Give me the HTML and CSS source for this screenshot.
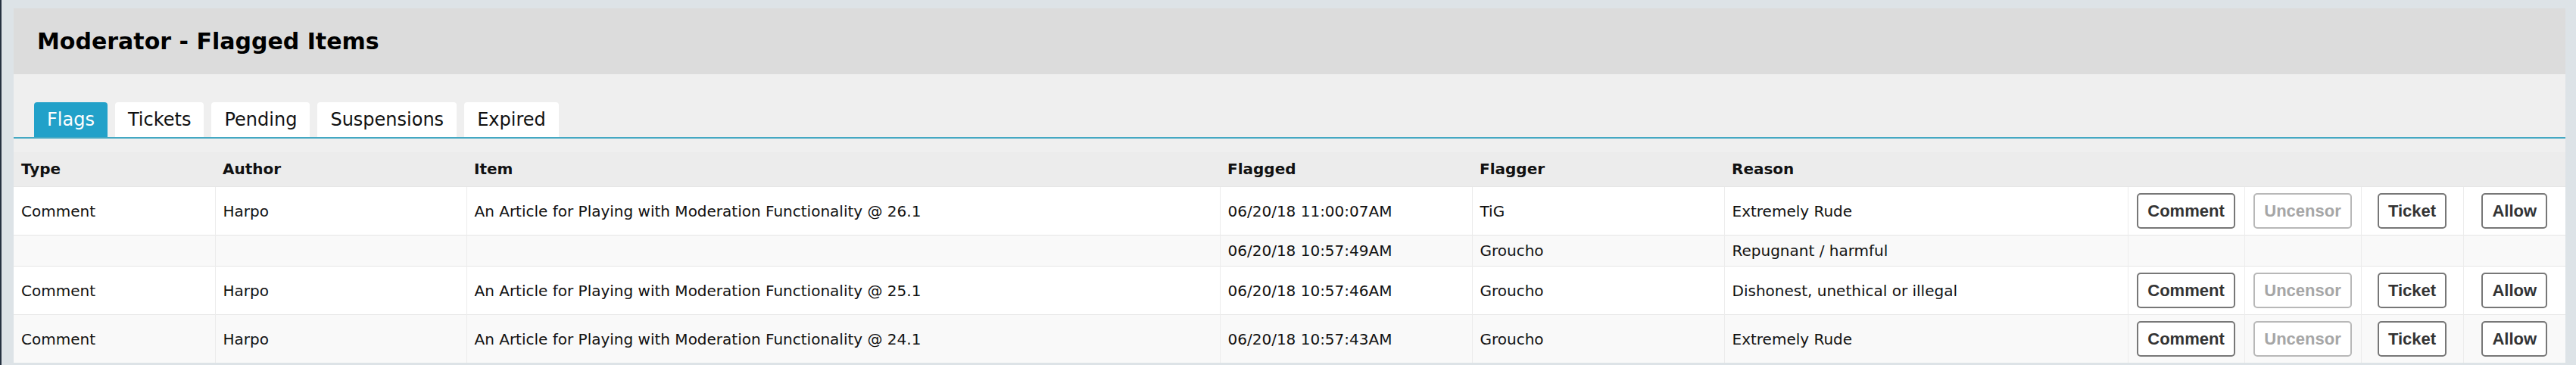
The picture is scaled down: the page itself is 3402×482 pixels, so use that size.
FILE: index.html
```html
<!DOCTYPE html>
<html>
<head>
    <meta charset="UTF-8">
    <link rel="stylesheet" href="styles.css">
</head>
<body>
    <div class="moderator-panel">
        <!-- Başlık -->
        <div class="panel-header">
            <h2>Moderator - Flagged Items</h2>
        </div>

        <div class="panel-body">
            <!-- Sekmeler -->
            <div class="tab-bar">
                <span class="tab active">Flags</span>
                <span class="tab">Tickets</span>
                <span class="tab">Pending</span>
                <span class="tab">Suspensions</span>
                <span class="tab">Expired</span>
            </div>

            <!-- İşaretli Öğeler -->
            <table class="flag-table">
                <colgroup>
                    <col class="col-type">
                    <col class="col-author">
                    <col class="col-item">
                    <col class="col-flagged">
                    <col class="col-flagger">
                    <col class="col-reason">
                    <col class="col-wide-btn">
                    <col class="col-wide-btn">
                    <col class="col-btn">
                    <col class="col-btn">
                </colgroup>
                <thead>
                    <tr>
                        <th>Type</th>
                        <th>Author</th>
                        <th>Item</th>
                        <th>Flagged</th>
                        <th>Flagger</th>
                        <th>Reason</th>
                        <th></th>
                        <th></th>
                        <th></th>
                        <th></th>
                    </tr>
                </thead>
                <tbody>
                    <tr>
                        <td>Comment</td>
                        <td>Harpo</td>
                        <td>An Article for Playing with Moderation Functionality @ 26.1</td>
                        <td>06/20/18 11:00:07AM</td>
                        <td>TiG</td>
                        <td>Extremely Rude</td>
                        <td class="action"><button class="mod-btn">Comment</button></td>
                        <td class="action"><button class="mod-btn" disabled>Uncensor</button></td>
                        <td class="action"><button class="mod-btn">Ticket</button></td>
                        <td class="action"><button class="mod-btn">Allow</button></td>
                    </tr>
                    <tr>
                        <td></td>
                        <td></td>
                        <td></td>
                        <td>06/20/18 10:57:49AM</td>
                        <td>Groucho</td>
                        <td>Repugnant / harmful</td>
                        <td></td>
                        <td></td>
                        <td></td>
                        <td></td>
                    </tr>
                    <tr>
                        <td>Comment</td>
                        <td>Harpo</td>
                        <td>An Article for Playing with Moderation Functionality @ 25.1</td>
                        <td>06/20/18 10:57:46AM</td>
                        <td>Groucho</td>
                        <td>Dishonest, unethical or illegal</td>
                        <td class="action"><button class="mod-btn">Comment</button></td>
                        <td class="action"><button class="mod-btn" disabled>Uncensor</button></td>
                        <td class="action"><button class="mod-btn">Ticket</button></td>
                        <td class="action"><button class="mod-btn">Allow</button></td>
                    </tr>
                    <tr>
                        <td>Comment</td>
                        <td>Harpo</td>
                        <td>An Article for Playing with Moderation Functionality @ 24.1</td>
                        <td>06/20/18 10:57:43AM</td>
                        <td>Groucho</td>
                        <td>Extremely Rude</td>
                        <td class="action"><button class="mod-btn">Comment</button></td>
                        <td class="action"><button class="mod-btn" disabled>Uncensor</button></td>
                        <td class="action"><button class="mod-btn">Ticket</button></td>
                        <td class="action"><button class="mod-btn">Allow</button></td>
                    </tr>
                </tbody>
            </table>
        </div>
    </div>
</body>
</html>
```

FILE: styles.css
```css
/* Temel Stiller */
body {
    margin: 0;
    padding: 11px 14px 0 16px;
    background-color: #dde3e7;
    border-left: 2px solid #263241;
    font-family: 'DejaVu Sans', Verdana, sans-serif;
    color: #111;
    height: 471px;
    overflow: hidden;
}

/* Panel */
.moderator-panel {
    background-color: #efefef;
}

.panel-header {
    display: flex;
    align-items: center;
    height: 87px;
    padding: 0 31px;
    background-color: #dcdcdc;
}

.panel-header h2 {
    margin: 0;
    font-size: 30px;
    font-weight: bold;
    color: #000;
}

/* Sekmeler */
.tab-bar {
    display: flex;
    gap: 10px;
    padding: 37px 0 0 27px;
    border-bottom: 2px solid #44a8c3;
}

.tab {
    display: block;
    padding: 9px 17px;
    line-height: 28px;
    font-size: 24px;
    background-color: #fff;
    color: #111;
    border-radius: 4px 4px 0 0;
}

.tab.active {
    background-color: #22a1c9;
    color: #fff;
}

/* Tablo */
.flag-table {
    width: 100%;
    margin-top: 18px;
    border-collapse: collapse;
    table-layout: fixed;
    font-size: 20px;
}

.col-type { width: 266px; }
.col-author { width: 332px; }
.col-item { width: 995px; }
.col-flagged { width: 333px; }
.col-flagger { width: 333px; }
.col-reason { width: 533px; }
.col-wide-btn { width: 154px; }
.col-btn { width: 135px; }

.flag-table th {
    padding: 10px 10px 11px;
    line-height: 24px;
    text-align: left;
    font-weight: bold;
    background-color: #ececec;
}

.flag-table td {
    padding: 8px 10px;
    line-height: 24px;
    white-space: nowrap;
    background-color: #fff;
    border-top: 1px solid #e6e6e6;
    border-left: 1px solid #ececec;
}

.flag-table td:first-child {
    border-left: none;
}

.flag-table tbody tr:nth-child(even) td {
    background-color: #f9f9f9;
}

.flag-table td.action {
    text-align: center;
    padding: 8px 0;
}

/* Butonlar */
.mod-btn {
    padding: 9px 12px;
    line-height: 25px;
    font-family: 'Liberation Sans', Arial, sans-serif;
    font-size: 22px;
    font-weight: bold;
    color: #333;
    background-color: #fff;
    border: 2px solid #777;
    border-radius: 5px;
    cursor: pointer;
}

.mod-btn:disabled {
    color: #a6a6a6;
    border-color: #b8b8b8;
    cursor: default;
}
```
